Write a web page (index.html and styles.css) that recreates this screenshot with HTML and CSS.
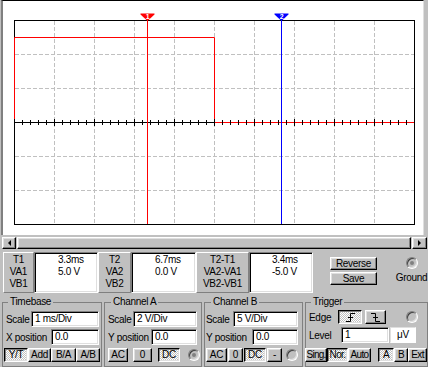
FILE: index.html
```html
<!DOCTYPE html>
<html lang="en">
<head>
    <meta charset="UTF-8">
    <meta name="viewport" content="width=device-width, initial-scale=1.0">
    <title>Oscilloscope</title>
    <link rel="stylesheet" href="styles.css">
</head>
<body>

    <!-- Scope screen -->
    <div class="screen">
        <svg class="plot" width="420" height="234" viewBox="3 1 420 234">
            <!-- dashed grid -->
            <g stroke="#c0c0c0" stroke-dasharray="4 2" fill="none">
                <path d="M54.5 21V224M94.5 21V224M134.5 21V224M174.5 21V224M214.5 21V224M254.5 21V224M294.5 21V224M334.5 21V224M374.5 21V224"/>
                <path d="M15 54.5H414M15 88.5H414M15 156.5H414M15 190.5H414"/>
            </g>
            <rect x="14.5" y="20.5" width="400" height="204" fill="none" stroke="#000"/>
            <line x1="14" y1="122.5" x2="414" y2="122.5" stroke="#000"/>

            <!-- channel A trace -->
            <polyline points="14.5,122.5 14.5,37.5 214.5,37.5 214.5,122.5 414,122.5" fill="none" stroke="#ff0000"/>

            <!-- ticks on the time axis -->
            <line x1="14" y1="122.5" x2="415" y2="122.5" stroke="#000" stroke-width="5" stroke-dasharray="1 7"/>
            <line x1="14" y1="122.5" x2="415" y2="122.5" stroke="#000" stroke-width="7" stroke-dasharray="1 39"/>

            <!-- cursors -->
            <line x1="147.5" y1="20" x2="147.5" y2="224" stroke="#ff0000"/>
            <line x1="281.5" y1="20" x2="281.5" y2="224" stroke="#0000ff"/>
            <polygon points="140.5,13.5 154.5,13.5 154.5,14.5 148,20.5 147,20.5 140.5,14.5" fill="#ff0000"/>
            <polygon points="274.5,13.5 288.5,13.5 288.5,14.5 282,20.5 281,20.5 274.5,14.5" fill="#0000ff"/>
            <text x="147.5" y="19" class="marker">1</text>
            <text x="281.5" y="19" class="marker">2</text>
        </svg>
    </div>

    <!-- Scroll bar -->
    <div class="hscroll">
        <span class="raised arrow arrow-left"></span>
        <span class="raised thumb"></span>
        <span class="raised arrow arrow-right"></span>
    </div>

    <!-- Cursor readouts -->
    <div class="readouts">
        <div class="cell-label w31">T1<br>VA1<br>VB1</div>
        <div class="sunken cell-value w64">3.3ms<br>5.0 V</div>
        <div class="cell-label w33">T2<br>VA2<br>VB2</div>
        <div class="sunken cell-value w65">6.7ms<br>0.0 V</div>
        <div class="cell-label w53">T2-T1<br>VA2-VA1<br>VB2-VB1</div>
        <div class="sunken cell-value w64 neg">3.4ms<br>-5.0 V</div>

        <div class="actions">
            <button class="btn action">Reverse</button>
            <button class="btn action">Save</button>
        </div>

        <div class="ground">
            <span class="radio dot"></span>
            <span>Ground</span>
        </div>
    </div>

    <!-- Settings -->
    <div class="groups">
        <fieldset class="group timebase">
            <legend>Timebase</legend>
            <div class="row">
                <span class="lbl">Scale</span>
                <span class="sunken field w68">1 ms/Div</span>
            </div>
            <div class="row">
                <span class="lbl">X position</span>
                <span class="sunken field w48">0.0</span>
            </div>
            <div class="btnrow">
                <button class="btn on w24">Y/T</button>
                <button class="btn w23">Add</button>
                <button class="btn w25">B/A</button>
                <button class="btn w24">A/B</button>
            </div>
        </fieldset>

        <fieldset class="group chan-a">
            <legend>Channel A</legend>
            <div class="row">
                <span class="lbl">Scale</span>
                <span class="sunken field w64">2 V/Div</span>
            </div>
            <div class="row">
                <span class="lbl">Y position</span>
                <span class="sunken field w46">0.0</span>
            </div>
            <div class="btnrow">
                <button class="btn w20">AC</button>
                <button class="btn w19">0</button>
                <button class="btn on w22 gap6">DC</button>
                <span class="radio dot"></span>
            </div>
        </fieldset>

        <fieldset class="group chan-b">
            <legend>Channel B</legend>
            <div class="row">
                <span class="lbl">Scale</span>
                <span class="sunken field w65">5 V/Div</span>
            </div>
            <div class="row">
                <span class="lbl">Y position</span>
                <span class="sunken field w46">0.0</span>
            </div>
            <div class="btnrow">
                <button class="btn w21">AC</button>
                <button class="btn w15">0</button>
                <button class="btn on w22">DC</button>
                <button class="btn w15">-</button>
                <span class="radio"></span>
            </div>
        </fieldset>

        <fieldset class="group trigger">
            <legend>Trigger</legend>
            <div class="row">
                <span class="lbl edge-lbl">Edge</span>
                <button class="btn on w24" title="Rising edge">
                    <svg width="11" height="9" viewBox="0 0 11 9"><path d="M1 8.5H5.5V0.5H10M3 4.5H8" fill="none" stroke="#000"/></svg>
                </button>
                <button class="btn w21 fall" title="Falling edge">
                    <svg width="11" height="9" viewBox="0 0 11 9"><path d="M1 0.5H5.5V8.5H10M3 4.5H8" fill="none" stroke="#000"/></svg>
                </button>
                <span class="radio"></span>
            </div>
            <div class="row">
                <span class="lbl level-lbl">Level</span>
                <span class="sunken field w48">1</span>
                <span class="unit">μV</span>
            </div>
            <div class="btnrow">
                <button class="btn w22 sing">Sing.</button>
                <button class="btn on w21">Nor.</button>
                <button class="btn w23">Auto</button>
                <button class="btn on w16 src">A</button>
                <button class="btn w14">B</button>
                <button class="btn w19">Ext</button>
            </div>
        </fieldset>
    </div>

</body>
</html>
```

FILE: styles.css
```css
* {
    box-sizing: border-box;
}

body {
    margin: 0;
    width: 428px;
    height: 367px;
    overflow: hidden;
    background-color: #c0c0c0;
    font-family: "Liberation Sans", Arial, sans-serif;
    font-size: 10px;
    letter-spacing: -0.3px;
    color: #000;
}

/* Bevels */
.raised {
    background-color: #c0c0c0;
    border: 1px solid;
    border-color: #fff #000 #000 #fff;
    box-shadow: inset -1px -1px #808080, inset 1px 1px #dfdfdf;
}

.sunken {
    background-color: #fff;
    border: 1px solid;
    border-color: #808080 #fff #fff #808080;
    box-shadow: inset 1px 1px #000, inset -1px -1px #dfdfdf;
}

/* Scope screen */
.screen {
    margin-left: 1px;
    width: 423px;
    height: 235px;
    border-top: 1px solid #000;
    border-left: 2px solid #808080;
    border-right: 1px solid #dfdfdf;
    background-color: #fff;
}

.plot {
    display: block;
}

.marker {
    font-family: "Liberation Sans", Arial, sans-serif;
    font-size: 7px;
    font-weight: bold;
    fill: #fff;
    text-anchor: middle;
}

/* Scroll bar */
.hscroll {
    display: flex;
    gap: 1px;
    height: 12px;
    margin: 2px 1px 0 2px;
}

.arrow {
    width: 14px;
    display: flex;
    align-items: center;
    justify-content: center;
}

.arrow-right {
    width: 15px;
}

.arrow::before {
    content: "";
    border: 3px solid transparent;
}

.arrow-left::before {
    border-right-color: #000;
    border-left-width: 0;
}

.arrow-right::before {
    border-left-color: #000;
    border-right-width: 0;
}

.thumb {
    flex: 1;
}

/* Readouts */
.readouts {
    display: flex;
    height: 41px;
    margin-top: 3px;
    padding-left: 3px;
}

.cell-label {
    text-align: center;
    line-height: 12px;
    padding-top: 1px;
    border: 1px solid;
    border-color: #fff #808080 #808080 #fff;
    white-space: nowrap;
}

.cell-value {
    line-height: 12px;
    padding: 1px 0 0 23px;
}

.cell-value.neg {
    padding-left: 22px;
}

.w31 { width: 31px; }
.w33 { width: 33px; }
.w53 { width: 53px; }
.w64 { width: 64px; }
.w65 { width: 65px; }
.w68 { width: 68px; }
.w48 { width: 48px; }
.w46 { width: 46px; }
.w25 { width: 25px; }
.w24 { width: 24px; }
.w23 { width: 23px; }
.w22 { width: 22px; }
.w21 { width: 21px; }
.w20 { width: 20px; }
.w19 { width: 19px; }
.w16 { width: 16px; }
.w15 { width: 15px; }
.w14 { width: 14px; }

.actions {
    display: flex;
    flex-direction: column;
    gap: 2px;
    margin-left: 17px;
    padding-top: 5px;
}

.ground {
    display: flex;
    flex-direction: column;
    align-items: center;
    gap: 3px;
    width: 33px;
    margin-left: 18px;
    padding-top: 5px;
    line-height: 12px;
    white-space: nowrap;
}

/* Buttons */
.btn {
    display: flex;
    align-items: center;
    justify-content: center;
    height: 14px;
    padding: 0;
    font: inherit;
    letter-spacing: inherit;
    color: inherit;
    line-height: 1;
    white-space: nowrap;
    overflow: visible;
    background-color: #c0c0c0;
    border: 1px solid;
    border-color: #fff #000 #000 #fff;
    box-shadow: inset -1px -1px #808080, inset 1px 1px #dfdfdf;
}

.btn.on {
    border-color: #000 #fff #fff #000;
    box-shadow: inset 1px 1px #808080, inset -1px -1px #dfdfdf;
    background: repeating-conic-gradient(#fff 0 25%, #c0c0c0 0 50%) 0 0 / 2px 2px;
}

.btn.action {
    width: 47px;
    height: 13px;
}

/* Radio buttons */
.radio {
    position: relative;
    width: 12px;
    height: 12px;
    border-radius: 50%;
    border: 1px solid;
    border-color: #808080 #fff #fff #808080;
    box-shadow: inset 1px 1px #404040, inset -1px -1px #dfdfdf;
    background-color: #c0c0c0;
}

.radio.dot::after {
    content: "";
    position: absolute;
    left: 3px;
    top: 3px;
    width: 4px;
    height: 4px;
    border-radius: 50%;
    background-color: #808080;
}

/* Setting groups */
.groups {
    display: flex;
    gap: 2px;
    height: 71px;
    margin-top: 3px;
    padding-left: 2px;
}

.group {
    margin: 0;
    min-width: 0;
    padding: 3px 1px 0;
    border: 1px solid #808080;
}

.group legend {
    padding: 0 2px;
    margin-left: 4px;
    line-height: 12px;
}

.timebase { width: 100px; }
.chan-a { width: 98px; }
.chan-b { width: 99px; }
.trigger {
    width: 123px;
    padding: 1px 0 0 1px;
}

.chan-a legend,
.chan-b legend {
    margin-left: 5px;
}

.row {
    display: flex;
    align-items: center;
    height: 16px;
}

.row + .row {
    margin-top: 2px;
}

.lbl {
    margin-left: 2px;
    white-space: nowrap;
}

.field {
    height: 16px;
    margin-left: auto;
    padding-left: 3px;
    line-height: 14px;
    white-space: nowrap;
}

.timebase .field {
    margin-right: 1px;
}

.chan-a .field,
.chan-b .field {
    margin-right: 3px;
}

.chan-b .lbl {
    margin-left: 0;
}

.btnrow {
    display: flex;
    align-items: center;
    height: 14px;
    margin-top: 3px;
}

.chan-a .btnrow {
    gap: 5px;
    padding-left: 2px;
}

.chan-a .gap6 {
    margin-left: 1px;
}

.chan-a .radio {
    margin-left: auto;
}

.chan-b .btnrow {
    gap: 1px;
}

.chan-b .radio {
    margin-left: auto;
    margin-right: 3px;
}

/* Trigger */
.edge-lbl {
    width: 29px;
}

.level-lbl {
    width: 32px;
}

.trigger .fall {
    margin-left: 3px;
}

.trigger .row .radio {
    margin-left: auto;
    margin-right: 9px;
}

.trigger .field {
    margin-left: 0;
}

.unit {
    width: 26px;
    height: 16px;
    margin-left: 1px;
    line-height: 14px;
    text-align: center;
    background-color: #fff;
    border: 1px solid;
    border-color: #dfdfdf #fff #fff #dfdfdf;
}

.trigger .btnrow {
    margin-top: 5px;
    margin-left: -2px;
    letter-spacing: -0.6px;
}

.trigger .sing {
    letter-spacing: -0.8px;
}

.trigger .src {
    margin-left: auto;
}
```
